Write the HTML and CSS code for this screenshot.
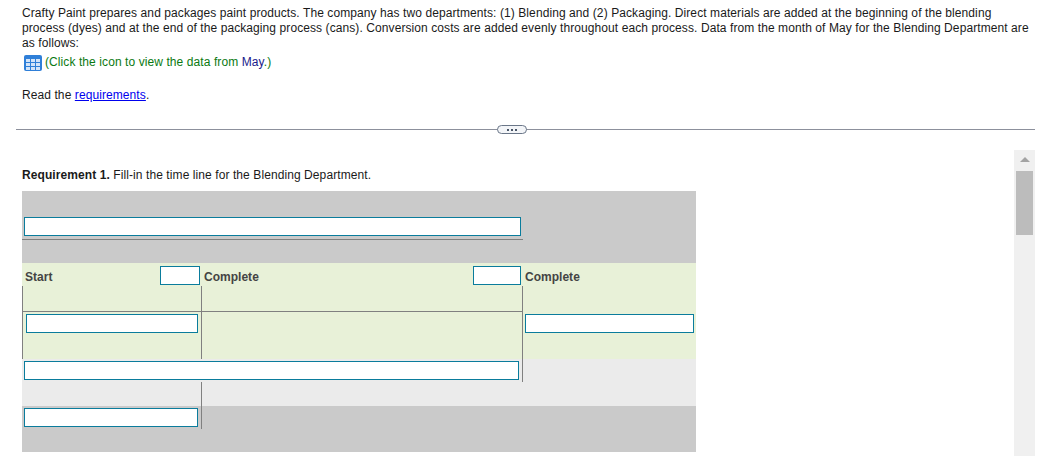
FILE: index.html
```html
<!DOCTYPE html>
<html lang="en">
<head>
<meta charset="utf-8">
<title>Crafty Paint</title>
<link rel="stylesheet" href="styles.css">
</head>
<body>
<section class="intro">
  <p class="statement">Crafty Paint prepares and packages paint products. The company has two departments: (1) Blending and (2) Packaging. Direct materials are added at the beginning of the blending process (dyes) and at the end of the packaging process (cans). Conversion costs are added evenly throughout each process. Data from the month of May for the Blending Department are as follows:</p>
  <p class="data-link">
    <svg class="grid-icon" width="18" height="16" viewBox="0 0 18 16" aria-hidden="true">
      <rect width="18" height="16" rx="2" fill="#2f7fd8"/>
      <g fill="#d3e4f9">
        <rect x="2" y="4" width="4" height="3"/><rect x="7" y="4" width="4" height="3"/><rect x="12" y="4" width="4" height="3"/>
        <rect x="2" y="8" width="4" height="3"/><rect x="7" y="8" width="4" height="3"/><rect x="12" y="8" width="4" height="3"/>
        <rect x="2" y="12" width="4" height="3"/><rect x="7" y="12" width="4" height="3"/><rect x="12" y="12" width="4" height="3"/>
      </g>
    </svg>
    <span class="click-text">(Click the icon to view the data from <span class="month">May</span>.)</span>
  </p>
  <p class="read">Read the <a href="#">requirements</a>.</p>
</section>
<div class="divider"><span class="pill"><i></i><i></i><i></i></span></div>
<div class="lower">
  <main class="work">
    <h2 class="req"><b>Requirement 1.</b> Fill-in the time line for the Blending Department.</h2>
    <div class="timeline">
      <div class="band band-head">
        <div class="head-cell"><input class="field f-title" type="text"></div>
      </div>
      <div class="band band-green">
        <div class="label-cell label-start"><span>Start</span><input class="field f-small" type="text"></div>
        <div class="label-cell label-mid"><span>Complete</span><input class="field f-small2" type="text"></div>
        <div class="label-cell label-end"><span>Complete</span></div>
        <div class="arm arm-a"></div>
        <div class="arm arm-b"></div>
        <div class="arm arm-c"></div>
        <div class="leg leg-a"><input class="field f-a" type="text"></div>
        <div class="leg leg-b"></div>
        <div class="leg leg-c"><input class="field f-c" type="text"></div>
      </div>
      <div class="band band-light">
        <div class="wide-cell"><input class="field f-wide" type="text"></div>
        <div class="tail-top"></div>
      </div>
      <div class="band band-foot">
        <div class="tail-bottom"><input class="field f-foot" type="text"></div>
      </div>
    </div>
  </main>
  <aside class="scrollbar"><span class="arrow"></span><span class="thumb"></span></aside>
</div>
</body>
</html>
```

FILE: styles.css
```css
* { box-sizing: border-box; }
html, body { margin: 0; height: 456px; overflow: hidden; background: #fff; }
body { font-family: "Liberation Sans", Arial, sans-serif; font-size: 12px; line-height: 15px; color: #1a1a1a; letter-spacing: 0.086px; }
p, h2 { margin: 0; }

.intro { padding: 6px 6px 0 22px; height: 129px; }
.statement { width: 1013px; }
.data-link { display: flex; align-items: flex-start; gap: 3px; margin-top: 3px; margin-left: 2px; height: 16px; }
.grid-icon { flex: none; margin-top: 1px; }
.click-text { color: #0b7a12; margin-top: 1px; }
.month { color: #1a1a8c; }
.read { margin-top: 18px; }
.read a { color: #0000ee; text-decoration: underline; }

.divider { margin: 0 6px 0 16px; height: 1px; background: #8c909c; position: relative; display: flex; justify-content: center; }
.pill { position: absolute; left: 481px; top: -4px; width: 30px; height: 9px; background: #f3f5f8; border: 1px solid #6a7688; border-radius: 5px; display: flex; align-items: center; justify-content: center; gap: 2px; }
.pill i { width: 2px; height: 2px; background: #4a5668; }

.lower { display: flex; justify-content: space-between; margin-top: 20px; padding-right: 6px; height: 306px; }
.work { padding-left: 22px; }
.req { font-size: 12px; font-weight: normal; line-height: 15px; margin-top: 18px; }
.req b { font-weight: bold; }

.timeline { width: 674px; margin-top: 8px; color: #444; font-weight: bold; letter-spacing: 0.02px; }
.band { display: grid; }
.band-head { height: 72px; background: #cacaca; }
.head-cell { width: 501px; height: 49px; padding: 26px 0 0 2px; border-bottom: 1px solid #808080; }
.band-green { height: 96px; background: #e8f1d8; grid-template-columns: 179px 322px 173px; grid-template-rows: 23px 26px 47px; }
.label-cell { display: flex; justify-content: space-between; align-items: flex-start; padding: 3px 1px 0 3px; }
.label-cell span { line-height: 15px; margin-top: 4px; }
.label-mid { padding-right: 2px; }
.label-end { padding-left: 2px; }
.arm-a { border-left: 1px solid #808080; border-bottom: 1px solid #808080; border-right: 1px solid #808080; width: 180px; }
.arm-b { border-right: 1px solid #808080; border-bottom: 1px solid #808080; margin-left: 1px; }
.leg-a { border-left: 1px solid #808080; border-right: 1px solid #808080; width: 180px; padding: 2px 0 0 3px; }
.leg-b { border-right: 1px solid #808080; margin-left: 1px; }
.leg-c { padding: 2px 0 0 2px; }
.band-light { height: 47px; background: #ebebeb; }
.wide-cell { width: 501px; height: 23px; padding: 2px 0 0 2px; border-right: 1px solid #808080; }
.tail-top { width: 180px; height: 24px; border-right: 1px solid #808080; }
.band-foot { height: 46px; background: #cacaca; }
.tail-bottom { width: 180px; height: 23px; padding: 2px 0 0 2px; border-right: 1px solid #808080; }

.field { display: block; height: 19px; padding: 0; margin: 0; background: #fff; border: 1px solid #0a7c9c; border-radius: 0; }
.f-title { width: 497px; }
.f-small { width: 40px; }
.f-small2 { width: 48px; }
.f-a { width: 172px; }
.f-c { width: 169px; }
.f-wide { width: 495px; }
.f-foot { width: 174px; }

.scrollbar { width: 21px; flex: none; background: #f0f0f0; display: flex; flex-direction: column; align-items: center; }
.arrow { width: 0; height: 0; margin-top: 7px; border-left: 5px solid transparent; border-right: 5px solid transparent; border-bottom: 5px solid #a3a3a3; }
.thumb { width: 17px; height: 64px; margin-top: 9px; background: #bcbcbc; }
```
